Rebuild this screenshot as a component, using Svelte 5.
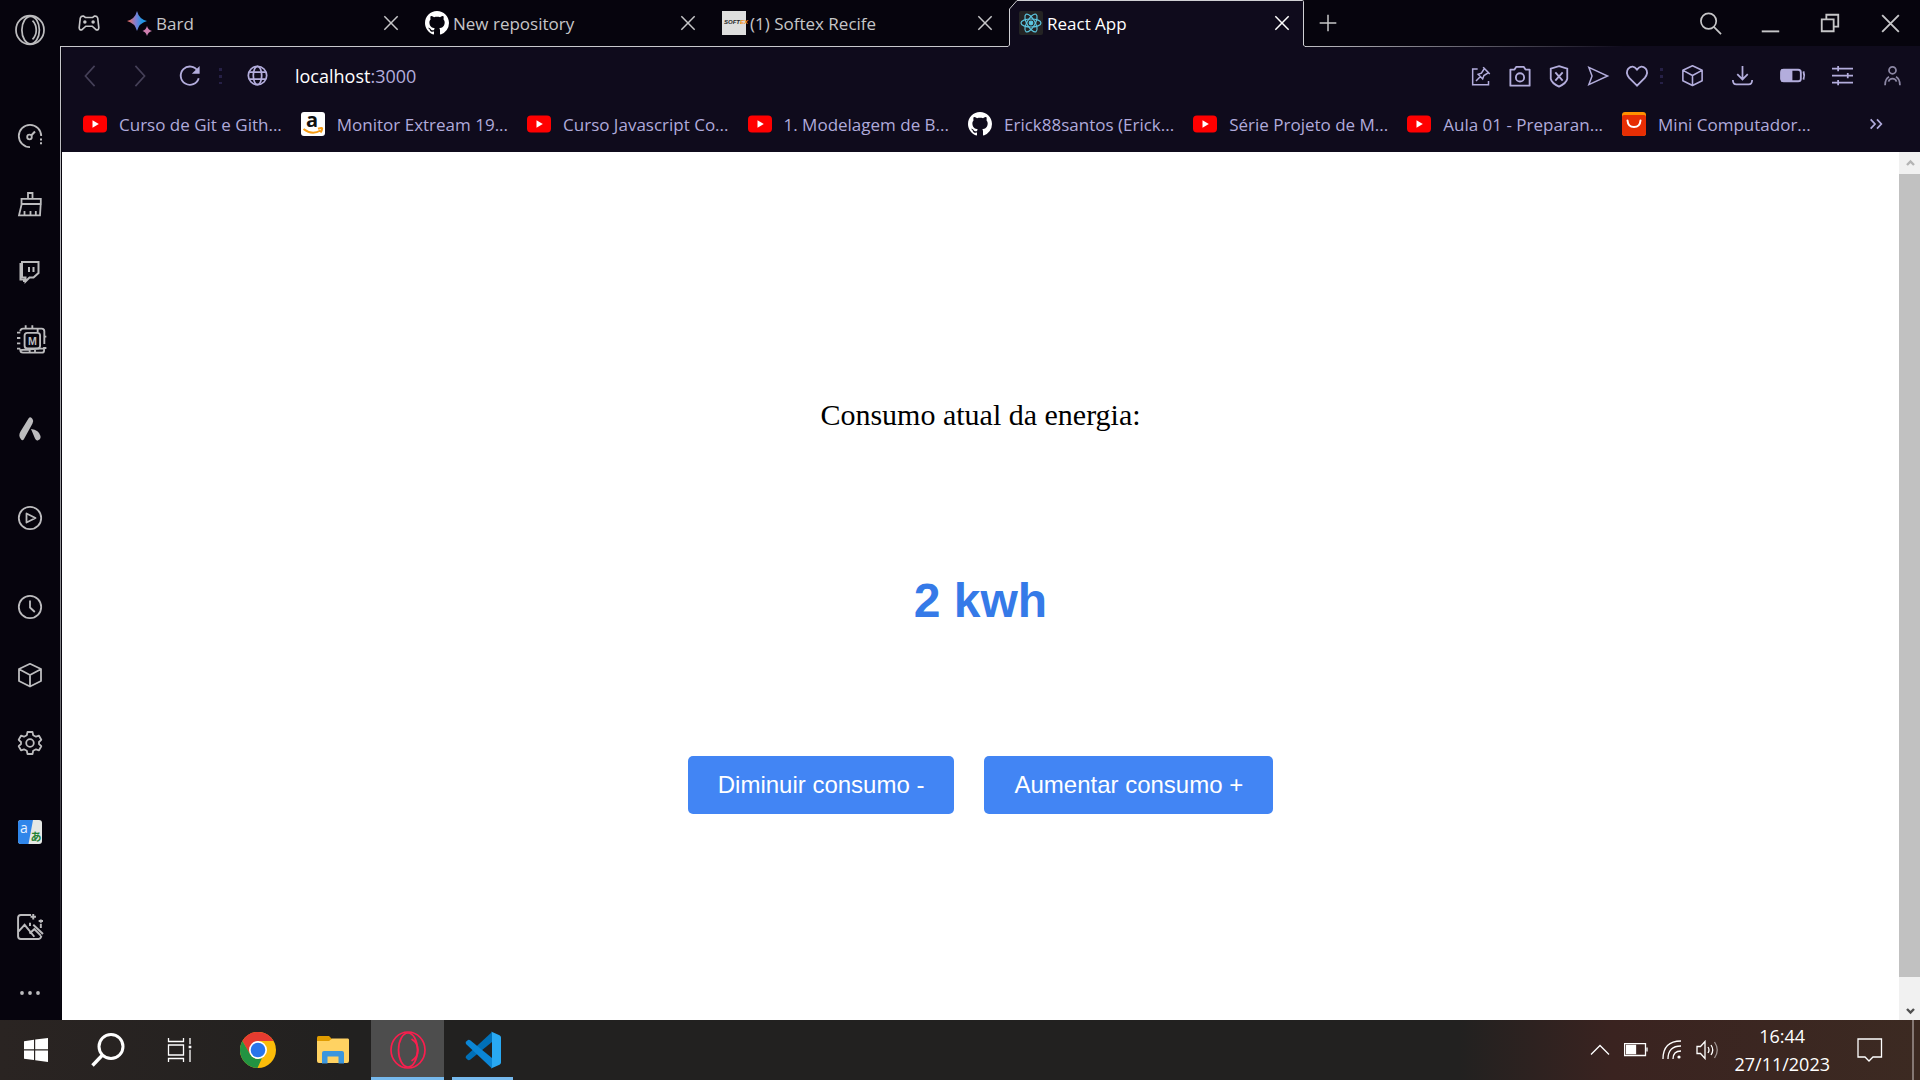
<script>
  let consumo = $state(2);

  const tabs = [
    { icon: 'bard', title: 'Bard' },
    { icon: 'github', title: 'New repository' },
    { icon: 'softex', title: '(1) Softex Recife' },
    { icon: 'react', title: 'React App', active: true }
  ];

  const bookmarks = [
    { icon: 'youtube', label: 'Curso de Git e Gith...' },
    { icon: 'amazon', label: 'Monitor Extream 19...' },
    { icon: 'youtube', label: 'Curso Javascript Co...' },
    { icon: 'youtube', label: '1. Modelagem de B...' },
    { icon: 'github', label: 'Erick88santos (Erick...' },
    { icon: 'youtube', label: 'Série Projeto de M...' },
    { icon: 'youtube', label: 'Aula 01 - Preparan...' },
    { icon: 'ali', label: 'Mini Computador...' }
  ];

  const sideGroups = [
    [['speed', 'Speed Dial'], ['broom', 'GX Cleaner'], ['twitch', 'Twitch'], ['chip', 'GX Control']],
    [['aria', 'Aria']],
    [['player', 'Player']],
    [['clock', 'Histórico'], ['cube', 'Extensões'], ['gear', 'Configurações']],
    [['translate', 'Tradutor']]
  ];

  const pageTools = [
    ['pin', 'Fixar'],
    ['camera', 'Instantâneo'],
    ['shield', 'Bloqueador'],
    ['send', 'Fluxo'],
    ['heart', 'Favoritos']
  ];
  const appTools = [
    ['cube', 'Extensões'],
    ['download', 'Downloads'],
    ['saver', 'Economia de bateria'],
    ['sliders', 'Configuração fácil'],
    ['person', 'Perfil']
  ];
</script>

{#snippet icon(name, size)}
  <svg class="icon" width={size} height={size} viewBox="0 0 24 24" fill="none" stroke="currentColor" stroke-width="1.8" aria-hidden="true">
    {#if name === 'bard'}
      <defs>
        <linearGradient id="bardFill" x1="0" x2="1">
          <stop offset="0.1" stop-color="#e0706f" /><stop offset="0.45" stop-color="#7b7fd6" /><stop offset="0.75" stop-color="#2196e3" />
        </linearGradient>
      </defs>
      <g stroke="none">
        <path fill="url(#bardFill)" d="M9 0Q11 8 19 10Q11 12 9 20Q7 12 -1 10Q7 8 9 0Z" />
        <path fill="#cf7fb0" d="M19 15Q20 19 24 20Q20 21 19 25Q18 21 14.500 20Q18 19 19 15Z" />
      </g>
    {:else if name === 'github'}
      <path fill="#fff" stroke="none" transform="scale(1.5)" d="M8 0C3.580 0 0 3.580 0 8c0 3.540 2.290 6.530 5.470 7.590.4.070.550-.170.550-.380 0-.190-.010-.820-.010-1.490-2.010.370-2.530-.490-2.690-.940-.090-.230-.480-.940-.820-1.130-.280-.150-.680-.520-.010-.530.630-.010 1.080.580 1.230.820.720 1.210 1.870.870 2.330.660.070-.520.280-.870.510-1.070-1.780-.2-3.640-.890-3.640-3.950 0-.870.310-1.590.820-2.150-.080-.2-.360-1.020.080-2.120 0 0 .670-.210 2.200.820.640-.180 1.320-.270 2-.270s1.360.090 2 .270c1.530-1.040 2.200-.820 2.200-.820.440 1.100.160 1.920.080 2.120.510.560.820 1.270.820 2.150 0 3.070-1.870 3.750-3.650 3.950.290.250.540.730.540 1.480 0 1.070-.010 1.930-.010 2.200 0 .210.150.460.550.380A8.010 8.010 0 0 0 16 8c0-4.420-3.580-8-8-8z" />
    {:else if name === 'softex'}
      <rect width="24" height="24" fill="#dedede" stroke="none" />
      <text x="2" y="13" class="tiny-logo" fill="#252525" stroke="none">SOFT<tspan fill="#f08c14">EX</tspan></text>
    {:else if name === 'react'}
      <rect width="24" height="24" rx="2" fill="#242424" stroke="none" />
      <g stroke="#5cc6e0" stroke-width="1.200">
        <ellipse cx="12" cy="12" rx="10" ry="4" />
        <ellipse cx="12" cy="12" rx="10" ry="4" transform="rotate(60 12 12)" />
        <ellipse cx="12" cy="12" rx="10" ry="4" transform="rotate(120 12 12)" />
        <circle cx="12" cy="12" r="1.800" fill="#5cc6e0" />
      </g>
    {:else if name === 'youtube'}
      <rect y="3.500" width="24" height="17" rx="4" fill="#f00" stroke="none" />
      <path d="M9.500 8.300L15.800 12L9.500 15.700Z" fill="#fff" stroke="none" />
    {:else if name === 'amazon'}
      <rect width="24" height="24" rx="3" fill="#fff" stroke="none" />
      <text x="5" y="15" class="amazon-letter" fill="#111" stroke="none">a</text>
      <path d="M2.500 17Q11 23.500 19.500 18.500M17 16.800Q22 15 21 17.300Q21 19 19.500 20.500" stroke="#f79c13" stroke-width="2" />
    {:else if name === 'ali'}
      <rect width="24" height="24" rx="3" fill="#ff9200" stroke="none" />
      <path d="M0 5Q0 3 2 3H22Q24 3 24 5V21Q24 24 21 24H3Q0 24 0 21Z" fill="#e62e04" stroke="none" />
      <path d="M5.500 8.500Q6 15 12 15T18.500 8.500" stroke="#fff" stroke-width="2" stroke-linecap="round" />
    {:else if name === 'opera'}
      <g stroke-width="1.400"><ellipse cx="12" cy="12" rx="11.200" ry="11.400" /><ellipse cx="12.500" cy="12" rx="7" ry="11" /><path d="M14 4.500Q17 7.500 17 12T14 19.500" /></g>
    {:else if name === 'speed'}
      <path d="M12 23.200A11.200 11.200 0 1 1 23.200 12" /><circle cx="11.500" cy="13" r="2.300" /><path d="M13.200 11.500L17 7.500M23 14.500V16.500M23 18.300V20.300" stroke-width="2" />
    {:else if name === 'broom'}
      <path d="M10 7V1H14.500V7M3.500 6.800H22.800V12H3.500ZM3.700 12L1 23.300H22L22.700 12M6.500 23V19M12.500 23V19M17.800 23V19" />
    {:else if name === 'twitch'}
      <path d="M4 2H20.500V13L15.500 17.500H11.500L7.500 21.500V17.500H4Z" stroke-width="2" /><path d="M2.500 3V19.500H6V22" stroke-width="2" /><path d="M11 7V12M15.500 7V12" stroke-width="2" />
    {:else if name === 'chip'}
      <g stroke-width="1.400">
        <path d="M4 5.500Q4 3.500 6 3.500H20Q22 3.500 22 5.500V9M22 9V15M23.500 9.500H22M23.500 18H21.800V20Q21.800 21.500 20 21.500H6Q4 21.500 4 19.500ZM8 1V3.500M13 1V3.500M1.500 6.500H4M1.500 10.500H4M1.500 14.500H4M1.500 18.500H4M11 18.500V21.500M15 18.500V21.500M17 3.500V6" />
        <rect x="7.200" y="6.700" width="11.600" height="11.600" rx="2" />
      </g>
      <text x="13" y="15.500" text-anchor="middle" class="chip-letter" fill="currentColor" stroke="none">M</text>
    {:else if name === 'aria'}
      <path d="M10.500 1.500Q12.500-1 14.500 2Q16 4 14.500 6.500L6 22Q4.500 24.500 2.800 22Q0 18.500 2.500 14.500ZM13 12Q21 13 22.500 19Q23 22 20.500 23Q18.500 24.500 17 21.500Z" fill="currentColor" stroke="none" />
    {:else if name === 'player'}
      <circle cx="12" cy="12" r="11.200" /><path d="M8.500 7.500L17.500 12L8.500 16.500Z" stroke-linejoin="round" />
    {:else if name === 'clock'}
      <circle cx="12" cy="12" r="11.200" /><path d="M12 5.500V12.500L16.800 17" />
    {:else if name === 'cube'}
      <path d="M12 .800L23 6V18L12 23.500L1 18V6ZM1.200 6.200L12 12L22.800 6.200M12 12V23" stroke-linejoin="round" />
    {:else if name === 'gear'}
      <circle cx="12" cy="12" r="3.800" />
      <path d="M9.500 1H14.500L15.200 4.200L18 5.700L21 4.700L23.300 8.800L21 11V13L23.300 15.200L21 19.300L18 18.300L15.200 19.800L14.500 23H9.500L8.800 19.800L6 18.300L3 19.300L.700 15.200L3 13V11L.700 8.800L3 4.700L6 5.700L8.800 4.200Z" stroke-linejoin="round" />
    {:else if name === 'translate'}
      <rect width="24" height="24" rx="3" fill="#e5e8e5" stroke="none" />
      <path d="M3 0H15L10.500 24H3Q0 24 0 21V3Q0 0 3 0Z" fill="#2f86ea" stroke="none" />
      <text x="2" y="13" class="latin-letter" fill="#e8f2ff" stroke="none">a</text>
      <text x="12.500" y="20.500" class="kana-letter" fill="#258334" stroke="none">あ</text>
    {:else if name === 'picture'}
      <path d="M13 1H3.500Q1 1 1 3.500V20.500Q1 23 3.500 23H20Q22 23 22.500 20M22 9V13M1.500 16L7 10L16 21M11.500 18L16 14L22 20M15 10L24 18.500M15 0V5M12.500 2.500H17.500M22 5V8M20 6.500H24M12 8V11" />
    {:else if name === 'dots'}
      <g fill="currentColor" stroke="none"><circle cx="4" cy="12" r="1.900" /><circle cx="12" cy="12" r="1.900" /><circle cx="20" cy="12" r="1.900" /></g>
    {:else if name === 'gamepad'}
      <path d="M2.500 6.500Q3.500 4 6 4.500L8 6H16L18 4.500Q20.500 4 21.500 6.500L22.700 17Q22.500 20 20 19.500L15.500 15.500H8.500L4 19.500Q1.500 20 1.300 17Z" /><circle cx="7.500" cy="11" r="1" fill="currentColor" /><circle cx="16.500" cy="11" r="1" fill="currentColor" />
    {:else if name === 'close'}
      <path d="M4 4L20 20M20 4L4 20" />
    {:else if name === 'plus'}
      <path d="M12 2V22M2 12H22" />
    {:else if name === 'search'}
      <circle cx="10" cy="9.500" r="8" /><path d="M15.500 15.500L23 23" />
    {:else if name === 'minimize'}
      <path d="M2 21H22" stroke-width="2.200" />
    {:else if name === 'restore'}
      <path d="M3 8H16V21H3ZM8 8V3H21V16H16" stroke-width="2" />
    {:else if name === 'back'}
      <path d="M17 1L7 12L17 23" />
    {:else if name === 'forward'}
      <path d="M7 1L17 12L7 23" />
    {:else if name === 'reload'}
      <path d="M20.500 6.500A10 10 0 1 0 21.500 14.500" stroke-width="2" /><path d="M22.500 1V9.500H14Z" fill="currentColor" stroke="none" />
    {:else if name === 'globe'}
      <circle cx="12" cy="12" r="10.500" stroke-width="2" /><ellipse cx="12" cy="12" rx="4.800" ry="10.500" stroke-width="2" /><path d="M2.500 8H21.500M2.500 16H21.500" stroke-width="2" />
    {:else if name === 'pin'}
      <path d="M8 3.500H2V22.500H21V18M6 18L11 13M8.500 10L14 15.500L15.500 11.500L21 8L16 3L12.500 8.500ZM14.500 1.500L22.500 9.500" />
    {:else if name === 'camera'}
      <path d="M1.500 5H6L8 2H16L18 5H22.500V22.500H1.500Z" stroke-width="2" stroke-linejoin="round" /><circle cx="12" cy="13.500" r="4.500" stroke-width="2" />
    {:else if name === 'shield'}
      <path d="M12 1.200L21 4V15Q20 20 12 23.500Q4 20 3 15V4ZM8 8L16 17M16 8L8 17" stroke-width="2" />
    {:else if name === 'send'}
      <path d="M2 2.500L22.500 12L2 21.500L5.500 12Z" stroke-width="1.600" />
    {:else if name === 'heart'}
      <path d="M12 22.500L3.500 14Q-1 8.500 2.500 4Q7.500-1 12 5Q16.500-1 21.500 4Q25 8.500 20.500 14Z" stroke-width="2" />
    {:else if name === 'download'}
      <path d="M12 1V16M6 10.500L12 16.500L18 10.500M1 17Q1 22 5 22H19Q23 22 23 17" stroke-width="2" />
    {:else if name === 'saver'}
      <rect x="1" y="6.500" width="19" height="11" rx="2.500" stroke-width="1.800" /><path d="M2 7H11V17H2Z" fill="currentColor" /><path d="M22.500 8Q24 12 22.500 16" />
    {:else if name === 'sliders'}
      <path d="M0 4H24M0 12H24M0 20H24M7 1V7M18 9V15M7 17V23" stroke-width="2" />
    {:else if name === 'person'}
      <circle cx="12" cy="6" r="4" stroke-width="2" /><path d="M3.500 23Q3.500 16 8 13.500M20.500 23Q20.500 16 16 13.500M7.500 19Q8.500 15.500 12 15.500T16.500 19" stroke-width="2" />
    {:else if name === 'more'}
      <path d="M4 5L10.500 12L4 19M13.500 5L20 12L13.500 19" stroke-width="2.600" />
    {/if}
  </svg>
{/snippet}

<div class="screen">
  <div class="browser">
    <nav class="sidebar" aria-label="Barra lateral">
      <button class="side-btn opera" aria-label="Menu Opera">{@render icon('opera', 30)}</button>
      <div class="groups">
        {#each sideGroups as group}
          <div class="group">
            {#each group as [name, label]}
              <button class="side-btn" class:wide={name === 'chip'} aria-label={label}>{@render icon(name, name === 'chip' ? 32 : 24)}</button>
            {/each}
          </div>
        {/each}
      </div>
      <div class="side-end">
        <button class="side-btn" aria-label="Papel de parede">{@render icon('picture', 26)}</button>
        <button class="side-btn" aria-label="Mais">{@render icon('dots', 24)}</button>
      </div>
    </nav>

    <div class="window">
      <div class="tabstrip">
        <button class="plain gx" aria-label="GX Corner">{@render icon('gamepad', 22)}</button>
        {#each tabs as tab}
          <div class="tab" class:active={tab.active}>
            {#if tab.active}
              <svg class="tab-outline" viewBox="0 0 297 47" preserveAspectRatio="none" aria-hidden="true">
                <path d="M-1 47V46.500L.500 45V9L8 .500H293.500Q294.500.500 294.500 1.500V45L296 46.500H297V47Z" fill="#0f0b1c" />
                <path d="M-1 46.500L.500 45V9L8 .500H293.500Q294.500.500 294.500 1.500V45L296 46.500H297" fill="none" stroke="#d0d0d4" />
              </svg>
            {/if}
            <span class="favicon">{@render icon(tab.icon, 24)}</span>
            <span class="tab-title">{tab.title}</span>
            <button class="plain tab-close" aria-label="Fechar guia">{@render icon('close', 20)}</button>
          </div>
        {/each}
        <button class="plain new-tab" aria-label="Nova guia">{@render icon('plus', 20)}</button>
        <div class="controls">
          <button class="plain search" aria-label="Buscar guias">{@render icon('search', 23)}</button>
          <button class="plain" aria-label="Minimizar">{@render icon('minimize', 21)}</button>
          <button class="plain" aria-label="Restaurar">{@render icon('restore', 22)}</button>
          <button class="plain" aria-label="Fechar">{@render icon('close', 25)}</button>
        </div>
      </div>
      <div class="top-line"></div>

      <div class="frame">
        <div class="left-line"></div>
        <div class="pane">
          <div class="toolbar">
            <div class="nav">
              <button class="plain dim" aria-label="Voltar">{@render icon('back', 22)}</button>
              <button class="plain dim" aria-label="Avançar">{@render icon('forward', 22)}</button>
              <button class="plain" aria-label="Recarregar">{@render icon('reload', 22)}</button>
            </div>
            <span class="dotted"></span>
            <button class="plain site" aria-label="Informações do site">{@render icon('globe', 21)}</button>
            <div class="address"><span class="host">localhost</span>:3000</div>
            <div class="page-tools">
              {#each pageTools as [name, label]}
                <button class="plain" aria-label={label}>{@render icon(name, name === 'pin' ? 20 : 22)}</button>
              {/each}
            </div>
            <span class="dotted"></span>
            <div class="app-tools">
              {#each appTools as [name, label]}
                <button class="plain" class:muted={name === 'person'} aria-label={label}>{@render icon(name, name === 'saver' ? 25 : 21)}</button>
              {/each}
            </div>
          </div>

          <div class="bookmarks">
            {#each bookmarks as mark}
              <a href="#top" class="bookmark">{@render icon(mark.icon, 24)}<span>{mark.label}</span></a>
            {/each}
            <button class="plain more" aria-label="Mais favoritos">{@render icon('more', 16)}</button>
          </div>

          <div class="viewport">
            <main class="page">
              <p class="label">Consumo atual da energia:</p>
              <h1 class="value">{consumo} kwh</h1>
              <div class="actions">
                <button class="action" onclick={() => (consumo -= 1)}>Diminuir consumo -</button>
                <button class="action" onclick={() => (consumo += 1)}>Aumentar consumo +</button>
              </div>
            </main>
            <div class="scrollbar" aria-hidden="true">
              <svg class="arrow faded" viewBox="0 0 22 22"><path d="M8 13L11.500 9.500L15 13" /></svg>
              <div class="thumb"></div>
              <svg class="arrow" viewBox="0 0 22 22"><path d="M8 11L11.500 14.500L15 11" /></svg>
            </div>
          </div>
        </div>
      </div>
    </div>
  </div>

  <footer class="taskbar">
    <div class="system-icons">
      <button class="task" aria-label="Iniciar">
        <svg width="24" height="24" viewBox="0 0 24 24" fill="#fff"><path d="M0 3.200L10 1.800V11.300H0ZM11.200 1.600L24 0V11.300H11.200ZM0 12.500H10V22L0 20.800ZM11.200 12.500H24V24L11.200 22.300Z" /></svg>
      </button>
      <button class="task" aria-label="Pesquisar">
        <svg width="34" height="34" viewBox="0 0 34 34" fill="none" stroke="#fff" stroke-width="3"><circle cx="20" cy="13.500" r="12" /><path d="M11.500 22L1.500 32.500" stroke-width="3.400" /></svg>
      </button>
      <button class="task" aria-label="Visão de tarefas">
        <svg width="26" height="24" viewBox="0 0 26 24" fill="none" stroke="#fff" stroke-width="1.300"><path d="M1.500 0V3.500H16.500V0M1.500 7H16.500V17H1.500ZM1.500 24V20.500H16.500V24M23 0V24" /><path d="M21 7H25V11H21Z" fill="#fff" stroke="#242120" /></svg>
      </button>
    </div>
    <div class="app-icons">
      <button class="task" aria-label="Chrome">
        <svg width="36" height="36" viewBox="0 0 36 36"><circle cx="18" cy="18" r="18" fill="#fbbc09" /><path d="M18 0A18 18 0 0 1 33.600 9H18L10 22.500L2.400 9A18 18 0 0 1 18 0Z" fill="#e53b30" /><path d="M2.400 9L10.200 22.500Q13 27 18 27L22 26L17.500 36A18 18 0 0 1 2.400 9Z" fill="#229342" /><circle cx="18" cy="18" r="9" fill="#fff" /><circle cx="18" cy="18" r="7.300" fill="#2a75ea" /></svg>
      </button>
      <button class="task" aria-label="Explorador de arquivos">
        <svg width="32" height="28" viewBox="0 0 32 28"><path d="M0 1.500Q0 0 1.500 0H12L14.500 2.500V7H0Z" fill="#e09c00" /><path d="M0 5H12L15 2.500H31Q32 2.500 32 4V25Q32 27 30 27H2Q0 27 0 25Z" fill="#ffd262" /><path d="M5 27.500V17Q5 15 7 15H25Q27 15 27 17V27.500H21.500V20.500H10.500V27.500Z" fill="#3b96dd" /></svg>
      </button>
      <button class="task selected" aria-label="Opera GX">
        <svg width="36" height="38" viewBox="0 0 36 38" fill="none" stroke="#fa1e4e" stroke-width="1.700"><ellipse cx="18" cy="19" rx="17" ry="18" /><ellipse cx="18" cy="19" rx="9.500" ry="17" /><path d="M21.500 8Q28 12 28 19T21.500 30" /></svg>
      </button>
      <button class="task open" aria-label="Visual Studio Code">
        <svg width="36" height="38" viewBox="0 0 36 38"><path d="M1 25Q0 26.500 1.500 27.800L3 29Q4.200 29.500 5.500 28.500L27 11V1Z" fill="#0070b8" /><path d="M1 13Q0 11.500 1.500 10.200L3 9Q4.200 8.500 5.500 9.500L27 27V37.500Z" fill="#0b86d6" /><path d="M26 .500L34.500 4.300Q36 5 36 6.500V31.500Q36 33 34.500 33.700L26 37.500Q27 37 27 35.500V2.500Q27 1 26 .500Z" fill="#29a9f3" /></svg>
      </button>
    </div>
    <div class="tray">
      <svg width="20" height="12" viewBox="0 0 20 12" class="line"><path d="M1 10.500L10 1.500L19 10.500" /></svg>
      <svg width="24" height="14" viewBox="0 0 24 14" class="line"><path d="M.500.500H21.500V12.500H.500Z" /><path d="M2.500 2.500H11.500V10.500H2.500Z" fill="#fff" /><path d="M23 4.500V8.500" /></svg>
      <svg width="20" height="20" viewBox="0 0 20 20" class="line"><path d="M1 19Q1 1 19 1M6 19Q6 6 19 6M11 19Q11 11 19 11" /><circle cx="17" cy="17" r="1.600" fill="#fff" stroke="none" /></svg>
      <svg width="24" height="20" viewBox="0 0 24 20" class="line"><path d="M1 6.500H4.500L9 1.500V18.500L4.500 13.500H1ZM12 7Q14 10 12 13M15 5Q18.500 10 15 15" /><path d="M18.500 2Q24 10 18.500 18" opacity="0.500" /></svg>
      <div class="clock"><span>16:44</span><span>27/11/2023</span></div>
      <svg width="26" height="26" viewBox="0 0 26 26" class="line bubble"><path d="M1 2H24.500V20H16L12 24L8 20H1Z" /></svg>
    </div>
    <div class="peek"></div>
  </footer>
</div>

<style>
  :global(body) {
    background: #06040d;
    overflow: hidden;
  }
  .screen {
    display: flex;
    flex-direction: column;
    height: 100vh;
    font-family: "Open Sans", "Noto Sans", "Noto Sans CJK JP", sans-serif;
  }
  button {
    font: inherit;
    color: inherit;
    background: none;
    border: 0;
    padding: 0;
    cursor: pointer;
  }
  .icon {
    display: block;
    flex: none;
    overflow: visible;
  }
  .plain {
    display: flex;
    align-items: center;
    justify-content: center;
    flex: none;
  }
  .browser {
    flex: 1;
    min-height: 0;
    display: flex;
    background: #06040d;
  }
  .sidebar {
    width: 60px;
    flex: none;
    display: flex;
    flex-direction: column;
    color: #bcbcbe;
  }
  .side-btn {
    display: flex;
    align-items: center;
    justify-content: center;
    width: 100%;
    height: 68px;
  }
  .wide {
    padding-left: 2px;
  }
  .opera {
    height: 60px;
    margin-bottom: 42px;
  }
  .groups {
    display: flex;
    flex-direction: column;
    gap: 21px;
  }
  .side-end {
    margin-top: auto;
    display: flex;
    flex-direction: column;
    gap: 12px;
  }
  .side-end .side-btn {
    height: 54px;
  }
  .window {
    flex: 1;
    min-width: 0;
    display: flex;
    flex-direction: column;
  }
  .tabstrip {
    height: 46px;
    display: flex;
    align-items: center;
    color: #c6c6c8;
    font-size: 17px;
  }
  .gx {
    width: 58px;
    height: 46px;
  }
  .tab {
    position: relative;
    flex: 0 1 297px;
    min-width: 0;
    height: 46px;
    display: flex;
    align-items: center;
    gap: 4px;
    padding: 0 14px 0 10px;
    box-sizing: border-box;
  }
  .active {
    color: #fff;
  }
  .tab-outline {
    position: absolute;
    left: 0;
    top: 0;
    width: 100%;
    height: 47px;
    overflow: visible;
  }
  .favicon,
  .tab-title,
  .tab-close {
    position: relative;
  }
  .tab-title {
    flex: 1;
    white-space: nowrap;
    overflow: hidden;
  }
  .new-tab {
    width: 44px;
    height: 46px;
  }
  .controls {
    margin-left: auto;
    display: flex;
  }
  .controls .plain {
    width: 60px;
    height: 46px;
  }
  .top-line {
    height: 1px;
    background: linear-gradient(90deg, #c8c8cc 0, #c8c8cc 66%, #0f0b1c 84%);
  }
  .frame {
    flex: 1;
    min-height: 0;
    display: flex;
  }
  .left-line {
    width: 1px;
    margin-right: 1px;
    background: linear-gradient(#c8c8cc, #88888c 60%, #06040d);
  }
  .pane {
    flex: 1;
    min-width: 0;
    display: flex;
    flex-direction: column;
    background: #0f0b1c;
  }
  .toolbar {
    height: 57px;
    display: flex;
    align-items: center;
    color: #b3addc;
  }
  .nav {
    display: flex;
    padding-left: 3px;
  }
  .nav .plain {
    width: 50px;
    height: 44px;
  }
  .dim {
    color: #454058;
  }
  .dotted {
    width: 3px;
    height: 16px;
    margin: 0 4px;
    background: repeating-linear-gradient(#262046 0 3px, transparent 3px 7px);
  }
  .site {
    width: 62px;
    height: 44px;
  }
  .address {
    flex: 1;
    padding-left: 7px;
    font-size: 18px;
  }
  .host {
    color: #fff;
  }
  .page-tools,
  .app-tools {
    display: flex;
  }
  .page-tools .plain {
    width: 39px;
    height: 44px;
  }
  .app-tools .plain {
    width: 50px;
    height: 44px;
  }
  .app-tools {
    padding-right: 3px;
  }
  .muted {
    color: #8c87a4;
  }
  .bookmarks {
    height: 40px;
    padding: 0 36px 8px 21px;
    display: flex;
    align-items: center;
    gap: 19px;
    color: #b0aadb;
  }
  .bookmark {
    display: flex;
    align-items: center;
    gap: 12px;
    color: inherit;
    text-decoration: none;
    font-size: 17px;
    white-space: nowrap;
  }
  .more {
    margin-left: auto;
  }
  .viewport {
    flex: 1;
    min-height: 0;
    display: flex;
    background: #fff;
  }
  .page {
    flex: 1;
    display: flex;
    flex-direction: column;
    align-items: center;
    justify-content: center;
    gap: 126px;
    padding-top: 26px;
    color: #000;
  }
  .label {
    margin: 0;
    font: 30px/62px "Liberation Serif", serif;
  }
  .value {
    margin: 0;
    font: bold 48px/58px "Liberation Sans", sans-serif;
    color: #357ae8;
  }
  .actions {
    display: flex;
    gap: 30px;
  }
  .action {
    padding: 15px 30px;
    border-radius: 5px;
    background: #4285f4;
    color: #fff;
    font: 24px/28px "Liberation Sans", sans-serif;
  }
  .scrollbar {
    width: 21px;
    flex: none;
    display: flex;
    flex-direction: column;
    background: #f1f1f1;
  }
  .arrow {
    width: 22px;
    height: 22px;
    flex: none;
    fill: none;
    stroke: #505050;
    stroke-width: 2.4;
  }
  .faded {
    stroke: #b4b4b4;
  }
  .thumb {
    flex: 1;
    margin-bottom: 21px;
    background: #c1c1c1;
  }
  .taskbar {
    height: 60px;
    flex: none;
    display: flex;
    color: #fff;
    background: linear-gradient(90deg, #2a2422 0, #222120 18%, #222120 76%, #3a2320 84%, #3c2a22 100%);
  }
  .system-icons {
    display: flex;
  }
  .system-icons .task {
    width: 72px;
  }
  .app-icons {
    flex: 1;
    display: flex;
    gap: 2px;
    padding-left: 5px;
  }
  .task {
    width: 73px;
    display: flex;
    align-items: center;
    justify-content: center;
    box-sizing: border-box;
  }
  .selected {
    background: #4d4d4d;
    box-shadow: inset 0 -3px #76b9ed;
  }
  .open {
    background: linear-gradient(#76b9ed, #76b9ed) center bottom / 61px 3px no-repeat;
  }
  .tray {
    display: flex;
    align-items: center;
    gap: 14px;
  }
  .line {
    fill: none;
    stroke: #fff;
    stroke-width: 1.3;
  }
  .clock {
    display: flex;
    flex-direction: column;
    align-items: center;
    font-size: 18px;
    line-height: 28px;
  }
  .bubble {
    margin: 0 29px 0 13px;
  }
  .peek {
    width: 6px;
    border-left: 2px solid #857874;
  }
  .tiny-logo {
    font: italic bold 6px "Liberation Sans", sans-serif;
  }
  .amazon-letter {
    font: bold 20px "Open Sans", sans-serif;
  }
  .chip-letter {
    font: bold 8px "Liberation Sans", sans-serif;
  }
  .latin-letter {
    font: 14px "Open Sans", sans-serif;
  }
  .kana-letter {
    font: bold 11px "Noto Sans CJK JP", sans-serif;
  }
</style>
